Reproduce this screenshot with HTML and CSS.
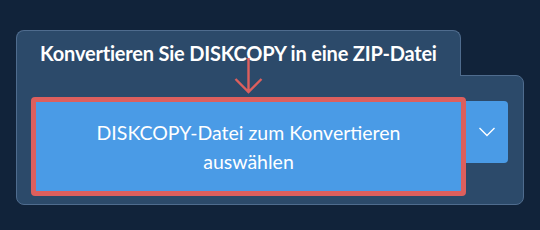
FILE: index.html
```html
<!DOCTYPE html>
<html lang="de">
<head>
<meta charset="UTF-8">
<title>DISKCOPY in ZIP konvertieren</title>
<link rel="stylesheet" href="styles.css">
</head>
<body>

<!-- converter widget -->
<div class="converter">
	<div class="tab">Konvertieren Sie DISKCOPY in eine ZIP-Datei</div>
	<div class="panel">
		<div class="picker">
			<div class="highlight">
				<button class="btn-select">DISKCOPY-Datei zum Konvertieren auswählen</button>
			</div>
			<button class="btn-more" aria-label="Mehr">
				<svg width="18" height="12" viewBox="0 0 18 12"><path d="M1.5 2 L9 9.5 L16.5 2" fill="none" stroke="#fff" stroke-width="1.4"/></svg>
			</button>
		</div>
	</div>

	<!-- annotation arrow -->
	<svg class="arrow" width="30" height="40" viewBox="0 0 30 40">
		<path d="M14.5 0 V34 M1.5 21 L14.5 34 L27.5 21" fill="none" stroke="#dd5f5d" stroke-width="2.4"/>
	</svg>
</div>

</body>
</html>
```

FILE: styles.css
```css
/* -------------------------------------
		GLOBAL
------------------------------------- */
* {
	margin: 0;
	padding: 0;
	box-sizing: border-box;
}

body {
	background: #11233a;
	font-family: Lato, "Liberation Sans", sans-serif;
	-webkit-font-smoothing: antialiased;
	padding: 30px 16px 0;
}

/* -------------------------------------
		CONVERTER
------------------------------------- */
.converter {
	position: relative;
	width: 508px;
}

.tab {
	position: relative;
	z-index: 1;
	display: inline-block;
	background: #2c4a6a;
	border: 1px solid #4f6c8e;
	border-bottom: none;
	border-radius: 8px 8px 0 0;
	margin-bottom: -1px;
	padding: 10px 23px 11px;
	color: #fff;
	font-size: 20px;
	font-weight: bold;
	line-height: 24px;
	letter-spacing: -0.2px;
}

.panel {
	background: #2c4a6a;
	border: 1px solid #4f6c8e;
	border-radius: 0 8px 8px 8px;
	padding: 21px 15px 8px 14px;
}

.picker {
	display: flex;
	align-items: flex-start;
}

.highlight {
	border: 5px solid #dd5f5d;
	border-radius: 4px;
}

.btn-select {
	display: block;
	width: 425px;
	height: 89px;
	background: #4a9be6;
	border: none;
	color: #fff;
	font-family: Lato, "Liberation Sans", sans-serif;
	font-size: 19.5px;
	font-weight: normal;
	line-height: 29px;
	padding: 0 40px;
	cursor: pointer;
}

.btn-more {
	display: flex;
	align-items: center;
	justify-content: center;
	width: 42px;
	height: 62px;
	margin-top: 4px;
	background: #4a9be6;
	border: none;
	border-radius: 0 4px 4px 0;
	cursor: pointer;
}

.arrow {
	position: absolute;
	z-index: 2;
	left: 218px;
	top: 28px;
}
```
